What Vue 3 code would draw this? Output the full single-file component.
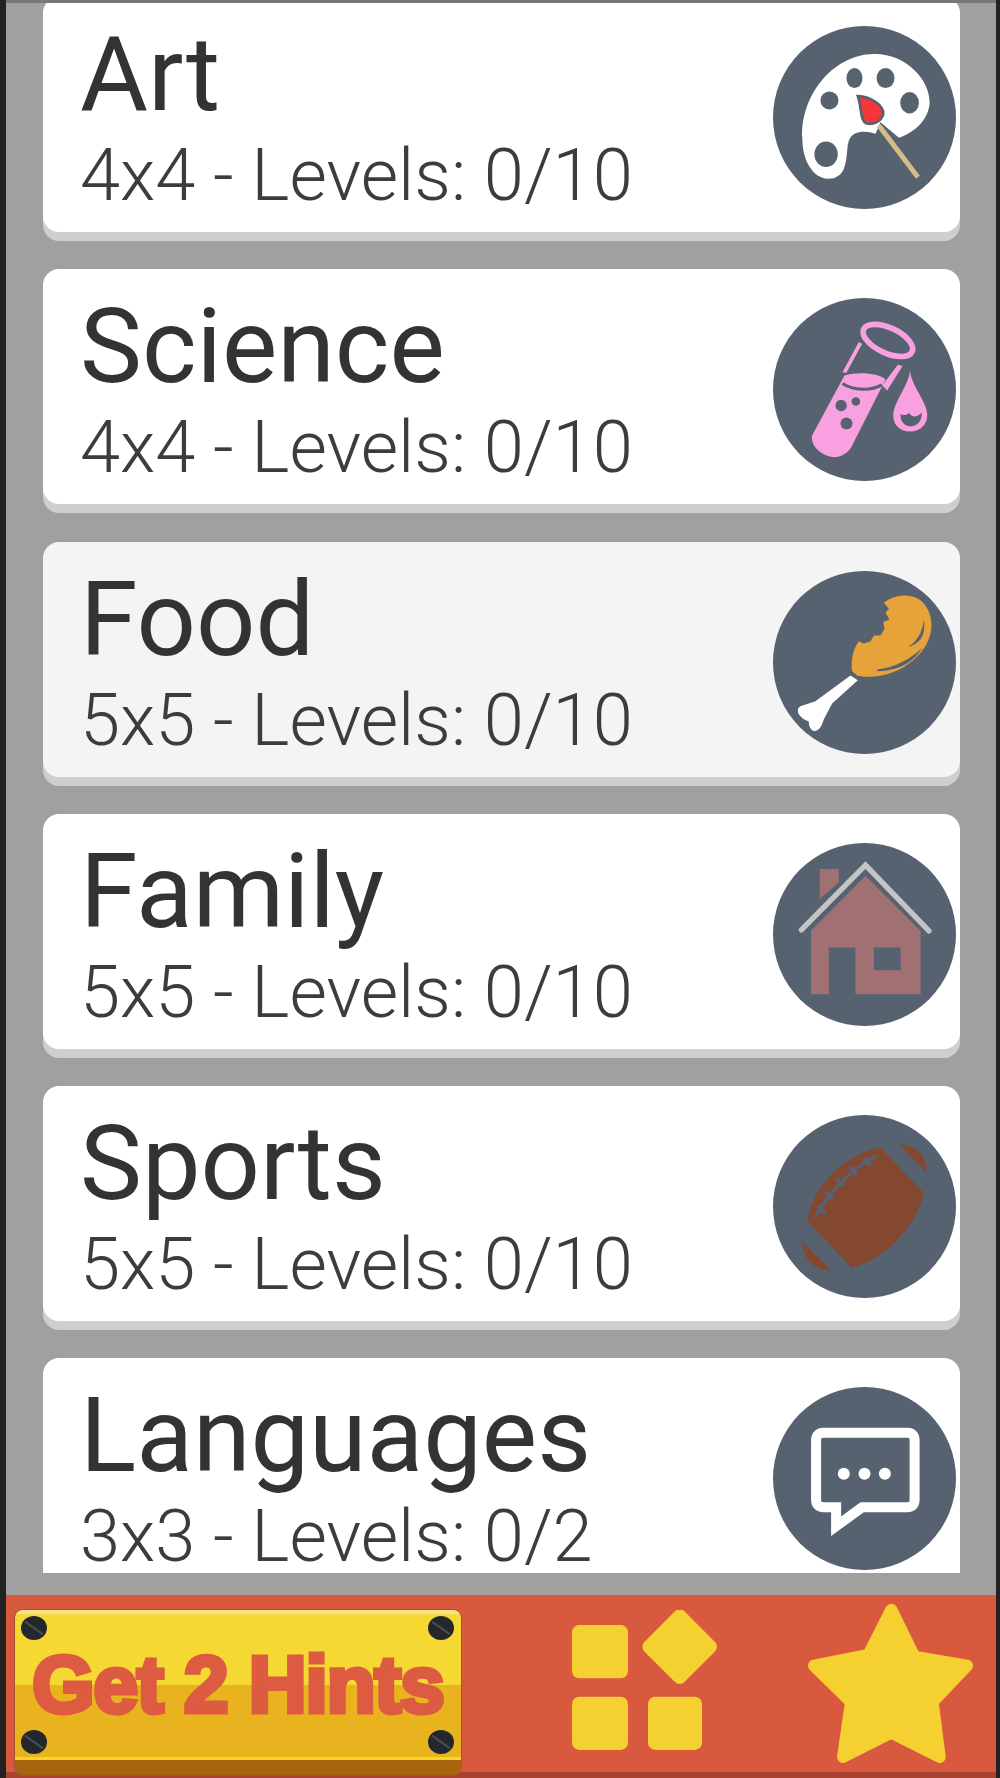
<template>
  <div class="screen">
    <div class="list">
      <div v-for="pack in packs" :key="pack.name" :class="['card', { active: pack.active }]">
        <div class="info">
          <div class="title">{{ pack.name }}</div>
          <div class="sub">{{ pack.size }} - Levels: {{ pack.levels }}</div>
        </div>
        <svg class="badge" :viewBox="`98 ${pack.top} 548 548`">
          <circle cx="372" :cy="pack.top + 274" r="274" fill="#566270" />

          <g v-if="pack.icon === 'art'">
            <path fill="#fff" d="M186 420C178 300 270 168 400 166C490 163 570 240 567 315C562 365 522 400 475 417L420 370L405 405C380 395 345 395 330 415C315 440 325 470 310 510C295 545 250 548 222 522C197 497 186 460 186 420Z" />
            <ellipse cx="342" cy="238" rx="24" ry="30" fill="#566270" />
            <ellipse cx="435" cy="238" rx="27" ry="30" fill="#566270" />
            <ellipse cx="267" cy="305" rx="27" ry="27" fill="#566270" />
            <ellipse cx="507" cy="312" rx="28" ry="32" fill="#566270" />
            <ellipse cx="257" cy="466" rx="35" ry="38" fill="#566270" />
            <line x1="415" y1="380" x2="532" y2="535" stroke="#d4bd85" stroke-width="15" />
            <path fill="#f5363a" stroke="#566270" stroke-width="8" d="M352 292C392 294 430 320 428 346C422 368 400 378 378 374C358 365 365 330 352 292Z" />
          </g>

          <g v-if="pack.icon === 'science'" fill="#f9a0e0">
            <ellipse cx="442" cy="185" rx="80" ry="38" transform="rotate(25 442 185)" fill="none" stroke="#f9a0e0" stroke-width="17" />
            <path d="M355 190L365 195L318 282L306 280Z" />
            <path d="M472 258L486 262L440 335L425 320Z" />
            <path d="M312 290C350 278 415 282 435 302L335 500C325 520 305 535 280 535C240 530 210 500 215 470Z" />
            <path d="M306 314C340 336 392 336 424 318" fill="none" stroke="#566270" stroke-width="9" />
            <circle cx="302" cy="380" r="17" fill="#566270" />
            <circle cx="346" cy="368" r="13" fill="#566270" />
            <circle cx="318" cy="434" r="18" fill="#566270" />
            <path d="M508 275C505 320 458 370 458 410C458 440 480 458 508 458C540 458 560 435 560 408C560 370 512 320 508 275Z" />
            <path fill="#566270" d="M480 405C478 430 495 442 510 442C530 442 546 425 543 400C535 412 518 420 505 402C497 410 487 410 480 405Z" />
          </g>

          <g v-if="pack.icon === 'food'">
            <path fill="#e5a33a" d="M430 160C470 130 530 130 555 170C590 220 570 290 520 330C470 375 400 390 350 378L335 365C330 330 340 295 355 275L370 282L390 275L400 258L420 258L432 238L428 218L447 210L435 190L445 178Z" />
            <path fill="#566270" d="M505 290C530 275 545 250 550 210C555 260 540 280 505 292Z" />
            <path fill="#566270" d="M410 360C460 355 510 330 545 295C520 340 470 365 410 365Z" />
            <path fill="#fff" d="M330 378L352 392L275 462L250 510Q240 545 222 545Q205 540 205 515Q190 512 178 498Q165 480 180 470L225 455Z" />
          </g>

          <g v-if="pack.icon === 'house'">
            <polygon fill="#a07072" points="238,150 295,150 295,190 238,240" />
            <polygon fill="#a07072" points="375,170 540,335 540,525 345,525 345,385 265,385 265,525 212,525 212,335" />
            <rect x="400" y="385" width="80" height="68" fill="#566270" />
            <polyline points="183,332 375,138 565,335" fill="none" stroke="#c4c4c4" stroke-width="16" stroke-linecap="round" />
          </g>

          <g v-if="pack.icon === 'ball'">
            <path fill="#844830" d="M420 175L550 312C530 400 440 510 333 535L200 395C215 290 320 190 420 175Z" />
            <path fill="#844830" d="M475 167C510 165 560 185 558 250Z" />
            <path fill="#844830" d="M187 458L272 543C225 545 185 510 187 458Z" />
            <g stroke="#566270" fill="none">
              <path stroke-width="10" d="M225 385C265 310 330 240 408 200" />
              <path stroke-width="12" d="M232 350L254 372M252 308L278 328M286 268L310 290M328 232L348 258M374 206L390 230" />
            </g>
          </g>

          <g v-if="pack.icon === 'chat'">
            <path fill="none" stroke="#fff" stroke-width="30" d="M250 225H500Q522 225 522 248V425Q522 448 500 448H365L287 505V448H250Q227 448 227 425V248Q227 225 250 225Z" />
            <circle cx="310" cy="348" r="18" fill="#fff" />
            <circle cx="372" cy="348" r="18" fill="#fff" />
            <circle cx="433" cy="348" r="18" fill="#fff" />
          </g>
        </svg>
      </div>
    </div>

    <div class="bottom-bar">
      <button class="hints">
        <span>Get 2 Hints</span>
        <i class="screw tl"></i>
        <i class="screw tr"></i>
        <i class="screw bl"></i>
        <i class="screw br"></i>
      </button>
      <svg class="grid-icon" viewBox="217 150 435 420" fill="#f4d030">
        <rect x="217" y="195" width="168" height="160" rx="22" />
        <rect x="217" y="410" width="168" height="160" rx="22" />
        <rect x="445" y="410" width="162" height="160" rx="22" />
        <rect x="455" y="175" width="170" height="170" rx="20" transform="rotate(45 540 260)" />
      </svg>
      <svg class="star-icon" viewBox="925 130 495 480">
        <polygon fill="#f4d030" stroke="#f4d030" stroke-width="36" stroke-linejoin="round" points="1175,150 1244,291 1402,318 1299,427 1320,592 1175,519 1030,592 1054,427 943,318 1106,286" />
      </svg>
    </div>
  </div>
</template>

<script setup>
const packs = [
  { name: 'Art', size: '4x4', levels: '0/10', icon: 'art', top: 82 },
  { name: 'Science', size: '4x4', levels: '0/10', icon: 'science', top: 58 },
  { name: 'Food', size: '5x5', levels: '0/10', icon: 'food', top: 65, active: true },
  { name: 'Family', size: '5x5', levels: '0/10', icon: 'house', top: 72 },
  { name: 'Sports', size: '5x5', levels: '0/10', icon: 'ball', top: 78 },
  { name: 'Languages', size: '3x3', levels: '0/2', icon: 'chat', top: 88 }
]
</script>

<style>
html, body {
  margin: 0;
  background: #222;
}
</style>

<style scoped>
.screen {
  width: 990px;
  height: 1775px;
  margin-left: 6px;
  border-top: 3px solid #777;
  background: #a0a0a0;
  display: flex;
  flex-direction: column;
  font-family: Roboto, "Liberation Sans", sans-serif;
  filter: blur(0.7px);
}

.list {
  height: 1570px;
  padding: 0 36px 0 37px;
  overflow: hidden;
  flex-shrink: 0;
}

.card {
  height: 235px;
  margin-top: -6px;
  margin-bottom: 43.3px;
  border-radius: 16px;
  background: #fff;
  box-shadow: 0 9px 0 #cfcfcf;
  display: flex;
  justify-content: space-between;
  align-items: flex-start;
  padding: 0 4px 0 37px;
}

.card.active {
  background: #f4f4f4;
}

.info {
  color: #333;
}

.title {
  font-size: 104.3px;
  line-height: 110px;
  margin-top: 22px;
}

.sub {
  font-size: 72.3px;
  font-weight: 300;
  line-height: 72px;
  margin-top: 11px;
  color: #3c3c3c;
}

.badge {
  width: 183px;
  height: 183px;
  margin-top: 29px;
  flex-shrink: 0;
}

.bottom-bar {
  margin-top: 22px;
  flex: 1;
  background: #d9593f;
  box-shadow: inset 0 -6px 0 #a8432f;
  display: flex;
  align-items: flex-start;
  padding-left: 9px;
}

.hints {
  position: relative;
  width: 446px;
  height: 165px;
  margin-top: 15px;
  box-sizing: border-box;
  padding: 0 0 15px;
  border: none;
  border-radius: 8px;
  background: linear-gradient(#fbe68a 0, #fbe68a 3px, #f5d832 5px, #f5d832 75px, #e8b31e 75px, #e8b31e 147px, #f9d327 147px, #f9d327 150px, #a8650f 150px);
  box-shadow: 0 0 0 1px #a8502c;
  flex-shrink: 0;
}

.hints span {
  font-family: "Liberation Sans", sans-serif;
  font-weight: 700;
  font-size: 80px;
  line-height: 90px;
  letter-spacing: -1px;
  color: #dd5b40;
  -webkit-text-stroke: 5px #dd5b40;
  white-space: nowrap;
}

.screw {
  position: absolute;
  width: 26px;
  height: 24px;
  border-radius: 50%;
  background: #24282c;
}

.screw::after {
  content: "";
  position: absolute;
  left: 2px;
  right: 2px;
  top: 11px;
  height: 2px;
  background: #4a4e52;
  transform: rotate(35deg);
}

.tl { left: 6px; top: 6px; }
.tr { right: 7px; top: 6px; }
.bl { left: 6px; top: 120px; }
.br { right: 7px; top: 120px; }

.grid-icon {
  width: 145px;
  height: 140px;
  margin: 15px 0 0 111px;
  flex-shrink: 0;
}

.star-icon {
  width: 165px;
  height: 160px;
  margin: 8px 0 0 91px;
  flex-shrink: 0;
}
</style>
